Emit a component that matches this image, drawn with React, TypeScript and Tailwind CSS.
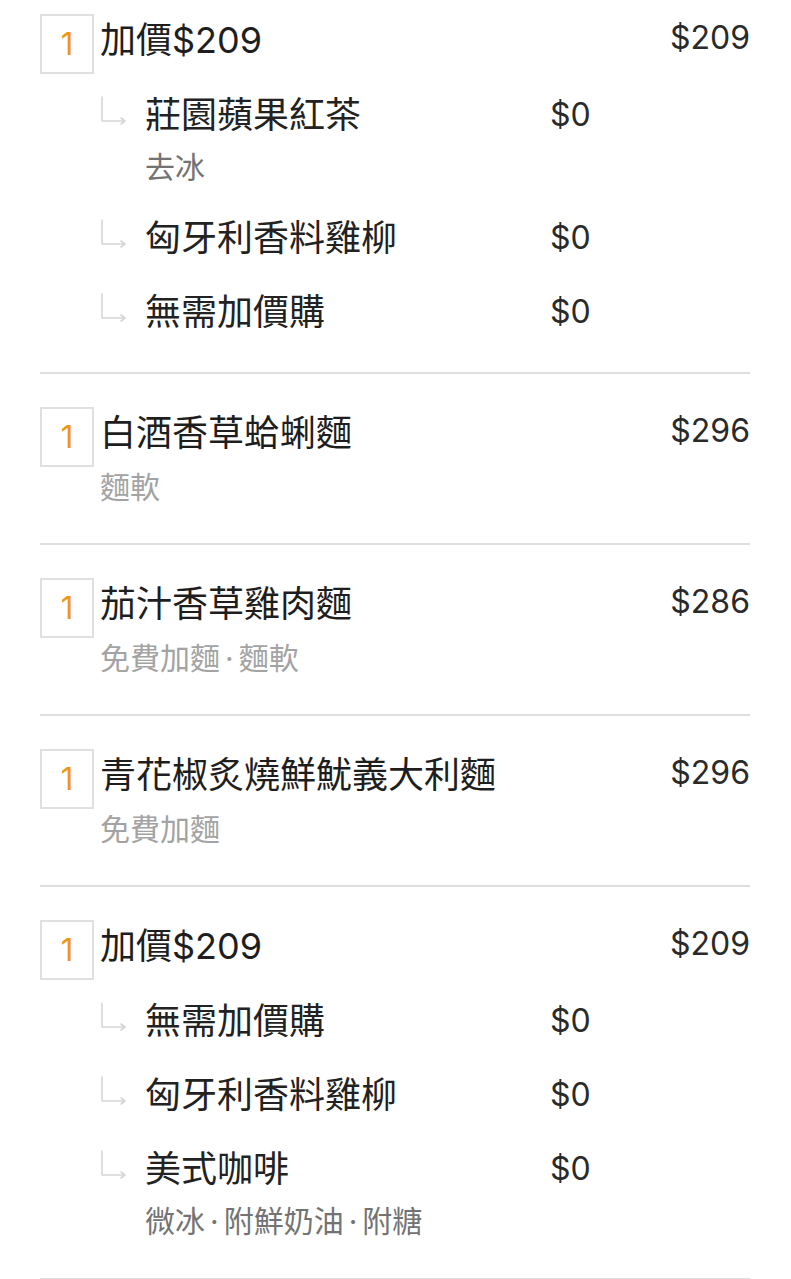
const FONT = "font-['Inter','Noto_Sans_CJK_TC',sans-serif]"

type SubItem = { name: string; price: string; note?: string }
type Item = { qty: number; name: string; price: string; note?: string; subs?: SubItem[] }

const items: Item[] = [
  {
    qty: 1,
    name: '加價$209',
    price: '$209',
    subs: [
      { name: '莊園蘋果紅茶', price: '$0', note: '去冰' },
      { name: '匈牙利香料雞柳', price: '$0' },
      { name: '無需加價購', price: '$0' },
    ],
  },
  { qty: 1, name: '白酒香草蛤蜊麵', price: '$296', note: '麵軟' },
  { qty: 1, name: '茄汁香草雞肉麵', price: '$286', note: '免費加麵·麵軟' },
  { qty: 1, name: '青花椒炙燒鮮魷義大利麵', price: '$296', note: '免費加麵' },
  {
    qty: 1,
    name: '加價$209',
    price: '$209',
    subs: [
      { name: '無需加價購', price: '$0' },
      { name: '匈牙利香料雞柳', price: '$0' },
      { name: '美式咖啡', price: '$0', note: '微冰·附鮮奶油·附糖' },
    ],
  },
]

// notes are joined with a spaced middle dot
function Note({ text }: { text: string }) {
  const parts = text.split('·')
  return (
    <>
      {parts.map((p, i) => (
        <span key={i}>
          {i > 0 && <span className="mx-[5px]">·</span>}
          {p}
        </span>
      ))}
    </>
  )
}

function ElbowArrow() {
  return (
    <svg width="45" height="52" viewBox="0 0 45 52" fill="none" className="shrink-0">
      <path
        d="M2 8 V32 H25 M21 29 L25 32 L21 35"
        stroke="#d6d6d6"
        strokeWidth={1.6}
        strokeLinecap="round"
        strokeLinejoin="round"
      />
    </svg>
  )
}

function SubRow({ sub }: { sub: SubItem }) {
  return (
    <div className="pt-[22px]">
      <div className="flex items-start ml-[60px]">
        <ElbowArrow />
        <div className="w-[405px] text-[36px] leading-[52px] text-[#222]">{sub.name}</div>
        <div className="text-[32px] leading-[52px] text-[#2a2a2a]">{sub.price}</div>
      </div>
      {sub.note && (
        <div className="ml-[105px] mt-[6px] mb-[3px] text-[30px] leading-[40px] text-[#737373]">
          <Note text={sub.note} />
        </div>
      )}
    </div>
  )
}

function OrderItem({ item }: { item: Item }) {
  return (
    <div className={`border-b-2 border-[#dedede] pt-[33px] ${item.subs ? 'pb-[34px]' : 'pb-[36px]'}`}>
      <div className="flex items-start">
        <div className="w-[54px] h-[60px] shrink-0 border-2 border-[#e0e0e0] flex items-center justify-center text-[31px] text-[#f19512]">
          {item.qty}
        </div>
        <div className="flex-1 ml-[6px] text-[36px] leading-[52px] text-[#1e1e1e]">{item.name}</div>
        <div className="text-[32px] leading-[48px] text-[#2a2a2a]">{item.price}</div>
      </div>
      {item.note && (
        <div className="ml-[60px] text-[30px] leading-[40px] text-[#a3a3a3]">
          <Note text={item.note} />
        </div>
      )}
      {item.subs && (
        <div className="-mt-[7px]">
          {item.subs.map((s, i) => (
            <SubRow key={i} sub={s} />
          ))}
        </div>
      )}
    </div>
  )
}

export default function App() {
  return (
    <div className={`w-[791px] h-[1279px] overflow-hidden bg-white ${FONT}`}>
      <div className="mx-[40px] w-[710px] -mt-[19px]">
        {items.map((it, i) => (
          <OrderItem key={i} item={it} />
        ))}
      </div>
    </div>
  )
}
